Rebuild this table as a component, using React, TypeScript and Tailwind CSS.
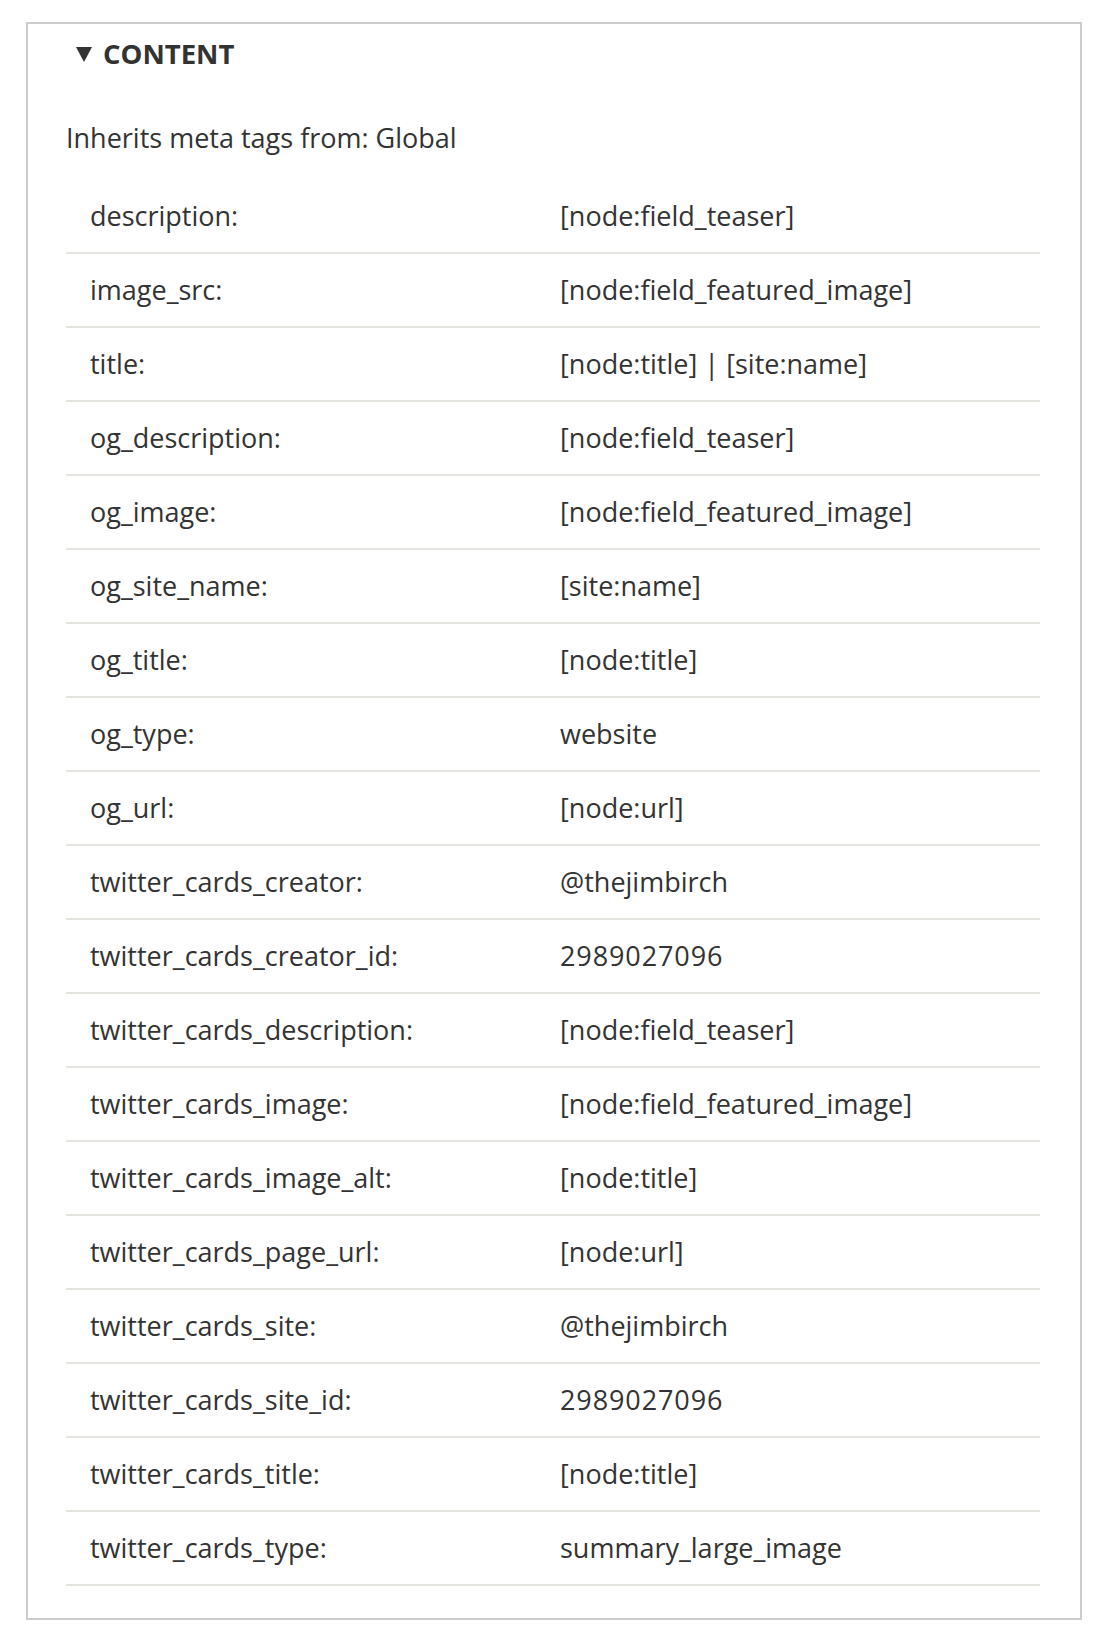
const rows: [string, string][] = [
  ["description:", "[node:field_teaser]"],
  ["image_src:", "[node:field_featured_image]"],
  ["title:", "[node:title] | [site:name]"],
  ["og_description:", "[node:field_teaser]"],
  ["og_image:", "[node:field_featured_image]"],
  ["og_site_name:", "[site:name]"],
  ["og_title:", "[node:title]"],
  ["og_type:", "website"],
  ["og_url:", "[node:url]"],
  ["twitter_cards_creator:", "@thejimbirch"],
  ["twitter_cards_creator_id:", "2989027096"],
  ["twitter_cards_description:", "[node:field_teaser]"],
  ["twitter_cards_image:", "[node:field_featured_image]"],
  ["twitter_cards_image_alt:", "[node:title]"],
  ["twitter_cards_page_url:", "[node:url]"],
  ["twitter_cards_site:", "@thejimbirch"],
  ["twitter_cards_site_id:", "2989027096"],
  ["twitter_cards_title:", "[node:title]"],
  ["twitter_cards_type:", "summary_large_image"],
];

export default function App() {
  return (
    <div
      className="min-h-[1648px] bg-white pl-[26px] pt-[22px] text-[#333333]"
      style={{ fontFamily: '"Open Sans", "DejaVu Sans", sans-serif' }}
    >
      <div className="w-[1056px] border-2 border-[#cccccc] pl-[38px] pr-[40px] pb-[32px]">
        <div className="flex h-[60px] items-center pl-[10px]">
          <svg width="16" height="15" viewBox="0 0 16 15" className="mr-[11px] shrink-0">
            <polygon points="0,0 16,0 8,15" fill="#333333" />
          </svg>
          <span className="text-[27.5px] font-bold leading-[36px]">CONTENT</span>
        </div>
        <p className="mt-[36px] text-[27px] leading-[36px]">Inherits meta tags from: Global</p>
        <div className="mt-[24px]">
          {rows.map(([k, v]) => (
            <div
              key={k}
              className="grid h-[74px] grid-cols-[494px_1fr] items-center border-b-2 border-[#e6e4df] text-[27px] leading-[36px]"
            >
              <div className="pl-[24px]">{k}</div>
              <div className={/^\d+$/.test(v) ? "tracking-[0.9px]" : ""}>{v}</div>
            </div>
          ))}
        </div>
      </div>
    </div>
  );
}
